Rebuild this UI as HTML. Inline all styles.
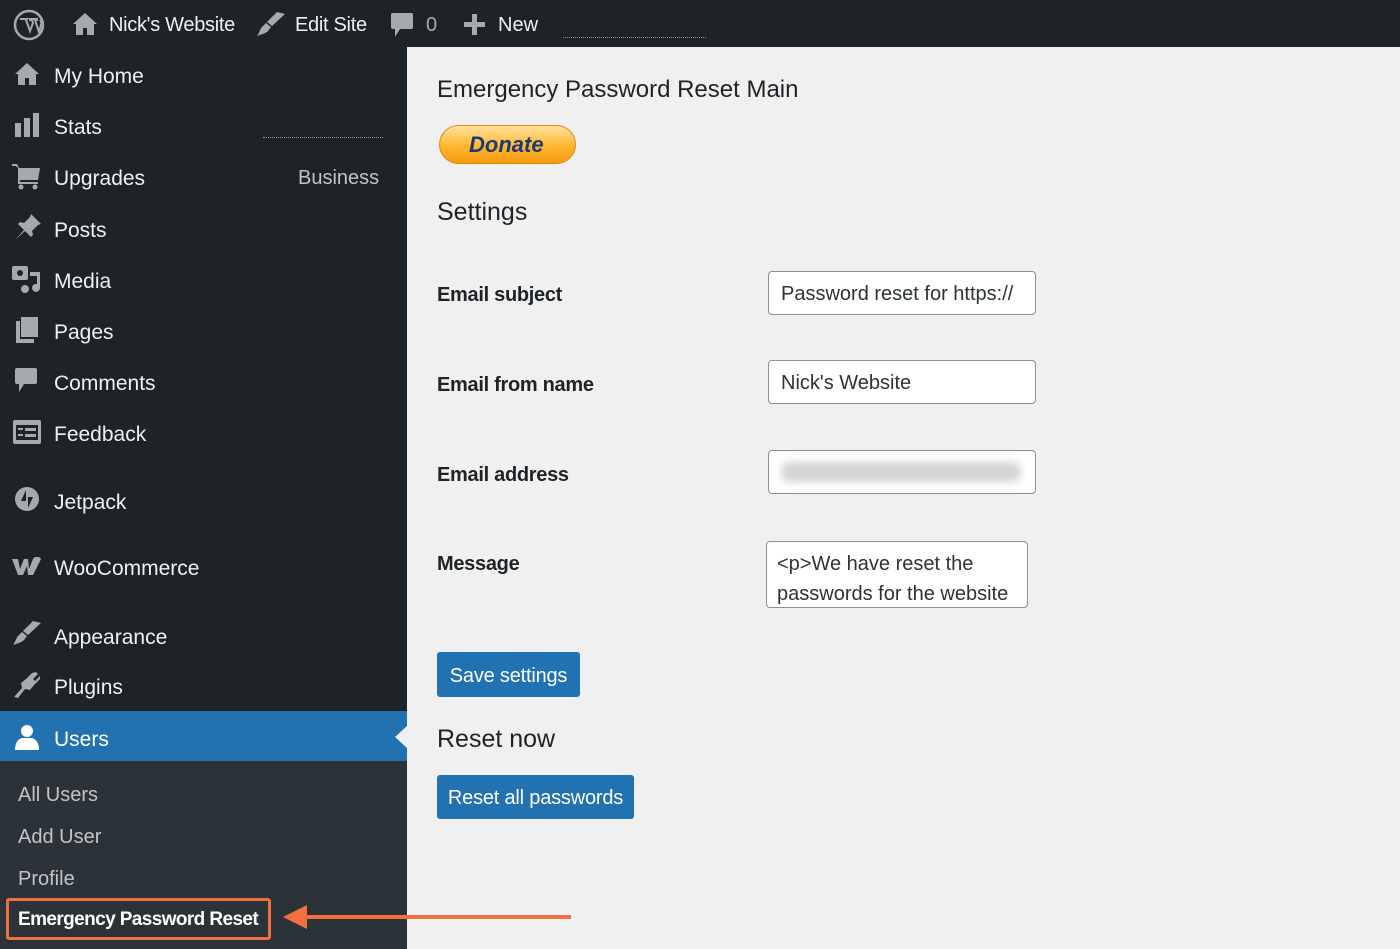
<!DOCTYPE html>
<html><head><meta charset="utf-8"><style>
*{margin:0;padding:0;box-sizing:border-box}
body{width:1400px;height:949px;overflow:hidden;background:#f0f0f1;font-family:"Liberation Sans",sans-serif;position:relative}
.a{position:absolute;white-space:nowrap}
#top{left:0;top:0;width:1400px;height:47px;background:#1d2327}
#side{left:0;top:47px;width:407px;height:902px;background:#1d2327}
#sub{left:0;top:761px;width:407px;height:188px;background:#2c3338}
.m{color:#f0f0f1;font-size:21px;left:54px}
.tb{color:#f0f0f1;font-size:20px;top:14px}
.ic{position:absolute;fill:#a7aaad}
.s{color:#c3c4c7;font-size:20px;left:18px}
.lbl{left:437px;font-size:20px;color:#1d2327;font-weight:bold}
.in{position:absolute;background:#fff;border:1px solid #8c8f94;border-radius:4px;font-size:20px;color:#2c3338;padding:0 12px;display:flex;align-items:center}
.btn{position:absolute;background:#2271b1;color:#fff;border-radius:3px;font-size:20px;display:flex;align-items:center;justify-content:center;letter-spacing:-0.2px}
h2{position:absolute;font-size:25px;font-weight:normal;color:#1d2327;left:437px;white-space:nowrap}
</style></head><body>
<div class="a" id="top"></div>
<div class="a" id="side"></div>
<div class="a" id="sub"></div>
<!-- top bar -->
<svg class="ic" style="left:13px;top:9px" width="32" height="32" viewBox="0 0 32 32"><circle cx="16" cy="16" r="14" fill="none" stroke="#a7aaad" stroke-width="2.5"/><path d="M7 10h7l-1 1 4 11 3-8-1-3h-2v-1h7v1h-2l4 12 2-7c1-3-1-5-1-5" fill="none" stroke="#a7aaad" stroke-width="2"/></svg>
<svg class="ic" style="left:73px;top:13px" width="24" height="22" viewBox="0 0 24 22"><path d="M12 0L0 11h3v11h7v-7h4v7h7V11h3z"/></svg>
<div class="a tb" style="left:109px;letter-spacing:-0.3px">Nick's Website</div>
<svg class="ic" style="left:257px;top:12px" width="28" height="24" viewBox="0 0 28 24"><path d="M28 2L20 0 10 10l5 4zM9 11l5 4-3 4c-2 2-5 3-11 5 3-4 3-7 5-9z"/></svg>
<div class="a tb" style="left:295px;letter-spacing:-0.3px">Edit Site</div>
<svg class="ic" style="left:391px;top:13px" width="22" height="26" viewBox="0 0 22 26"><path d="M2 0h18a2 2 0 012 2v12a2 2 0 01-2 2H9l-5 8v-8H2a2 2 0 01-2-2V2a2 2 0 012-2z"/></svg>
<div class="a tb" style="left:426px;color:#a7aaad">0</div>
<svg class="ic" style="left:464px;top:14px" width="21" height="21"><rect x="8" y="0" width="5" height="21"/><rect x="0" y="8" width="21" height="5"/></svg>
<div class="a tb" style="left:498px">New</div>
<div class="a" style="left:563px;top:37px;width:143px;border-top:1px dotted #8c8f94"></div>
<!-- side menu -->
<svg class="ic" style="left:15px;top:63px" width="24" height="22" viewBox="0 0 24 22"><path d="M12 0L0 11h3v11h7v-7h4v7h7V11h3z"/></svg>
<div class="a m" style="top:65px">My Home</div>
<svg class="ic" style="left:15px;top:113px" width="24" height="24"><rect x="0" y="10" width="6" height="14"/><rect x="9" y="5" width="6" height="19"/><rect x="18" y="0" width="6" height="24"/></svg>
<div class="a m" style="top:116px">Stats</div>
<div class="a" style="left:263px;top:137px;width:120px;border-top:1px dotted #8c8f94"></div>
<svg class="ic" style="left:12px;top:164px" width="28" height="26" viewBox="0 0 28 26"><path d="M0 0h5l2 4h21l-2 12H8v2h18v2H6V4L4 2H0z"/><circle cx="9" cy="23" r="2.5"/><circle cx="23" cy="23" r="2.5"/></svg>
<div class="a m" style="top:167px">Upgrades</div>
<div class="a" style="left:298px;top:167px;font-size:20px;color:#c3c4c7">Business</div>
<svg class="ic" style="left:13px;top:214px" width="28" height="26" viewBox="0 0 28 26"><path d="M18 0l10 10-3 1-6 6 1 4-2 2-6-6-10 9 9-10-6-6 2-2 4 1 6-6z"/></svg>
<div class="a m" style="top:219px">Posts</div>
<svg class="ic" style="left:12px;top:266px" width="30" height="28" viewBox="0 0 30 28"><rect x="0" y="0" width="16" height="14" rx="2"/><circle cx="8" cy="7" r="3" fill="#1d2327"/><path d="M18 6h10v16a4 4 0 11-3-4V10h-7z"/><circle cx="13" cy="23" r="4"/></svg>
<div class="a m" style="top:270px">Media</div>
<svg class="ic" style="left:16px;top:317px" width="22" height="26"><rect x="5" y="0" width="17" height="20"/><rect x="0" y="4" width="4" height="22"/><rect x="0" y="22" width="18" height="4"/></svg>
<div class="a m" style="top:321px">Pages</div>
<svg class="ic" style="left:15px;top:368px" width="22" height="26" viewBox="0 0 22 26"><path d="M2 0h18a2 2 0 012 2v12a2 2 0 01-2 2H9l-5 8v-8H2a2 2 0 01-2-2V2a2 2 0 012-2z"/></svg>
<div class="a m" style="top:372px">Comments</div>
<svg class="ic" style="left:13px;top:420px" width="28" height="24"><rect x="0" y="0" width="28" height="24" rx="2"/><rect x="3" y="5" width="22" height="15" fill="#1d2327"/><rect x="5" y="8" width="5" height="2"/><rect x="12" y="8" width="11" height="3"/><rect x="5" y="14" width="5" height="2"/><rect x="12" y="14" width="11" height="3"/></svg>
<div class="a m" style="top:423px">Feedback</div>
<svg class="ic" style="left:15px;top:487px" width="24" height="24" viewBox="0 0 24 24"><circle cx="12" cy="12" r="12"/><path d="M11 3v11H6zM13 21V10h5z" fill="#1d2327"/></svg>
<div class="a m" style="top:491px">Jetpack</div>
<svg class="ic" style="left:12px;top:557px" width="30" height="20" viewBox="0 0 30 20"><path d="M0 2h6l2 10 4-10h4l1 10 4-10c2-3 6-3 8 0l-8 16h-5l-1-9-4 9H6z"/></svg>
<div class="a m" style="top:557px">WooCommerce</div>
<svg class="ic" style="left:13px;top:621px" width="28" height="24" viewBox="0 0 28 24"><path d="M28 2L20 0 10 10l5 4zM9 11l5 4-3 4c-2 2-5 3-11 5 3-4 3-7 5-9z"/></svg>
<div class="a m" style="top:626px">Appearance</div>
<svg class="ic" style="left:14px;top:672px" width="26" height="26" viewBox="0 0 26 26"><path d="M22 0l2 2-5 5 2 2 5-5 0 3-6 6-4 5-5-1-7 9-4-1 8-9-1-5 5-4 6-6z"/></svg>
<div class="a m" style="top:676px">Plugins</div>
<div class="a" style="left:0;top:711px;width:407px;height:50px;background:#2271b1"></div>
<div class="a" style="left:395px;top:726px;width:0;height:0;border-top:11px solid transparent;border-bottom:11px solid transparent;border-right:12px solid #f0f0f1"></div>
<svg class="ic" style="left:15px;top:724px;fill:#fff" width="24" height="26" viewBox="0 0 24 26"><circle cx="12" cy="7" r="6"/><path d="M0 26c0-8 4-12 8-12h8c4 0 8 4 8 12z"/></svg>
<div class="a m" style="top:728px;color:#fff">Users</div>
<div class="a s" style="top:784px">All Users</div>
<div class="a s" style="top:826px">Add User</div>
<div class="a s" style="top:868px">Profile</div>
<div class="a" style="left:6px;top:898px;width:265px;height:42px;border:3px solid #f26f3f;border-radius:3px"></div>
<div class="a" style="left:18px;top:909px;font-size:19px;color:#fff;font-weight:bold;letter-spacing:-0.6px">Emergency Password Reset</div>
<!-- arrow -->
<div class="a" style="left:300px;top:915px;width:271px;height:4px;background:#f26f3f"></div>
<div class="a" style="left:283px;top:905px;width:0;height:0;border-top:12px solid transparent;border-bottom:12px solid transparent;border-right:24px solid #f26f3f"></div>
<!-- main -->
<h2 style="top:76px;font-size:24px">Emergency Password Reset Main</h2>
<div class="a" style="left:439px;top:125px;width:137px;height:39px;border-radius:20px;background:linear-gradient(#ffe2a0,#ffb52e 55%,#f59b12);border:1px solid #e08a10"></div>
<div class="a" style="left:469px;top:132px;font-size:22px;font-weight:bold;font-style:italic;color:#1b3a78">Donate</div>
<h2 style="top:198px">Settings</h2>
<div class="a lbl" style="top:284px;letter-spacing:-0.3px">Email subject</div>
<div class="in" style="left:768px;top:271px;width:268px;height:44px;padding-top:3px">Password reset for https://</div>
<div class="a lbl" style="top:374px;letter-spacing:-0.3px">Email from name</div>
<div class="in" style="left:768px;top:360px;width:268px;height:44px;padding-top:3px">Nick's Website</div>
<div class="a lbl" style="top:464px;letter-spacing:-0.3px">Email address</div>
<div class="in" style="left:768px;top:450px;width:268px;height:44px"><div style="width:240px;height:20px;background:#d4d4d6;filter:blur(4px);border-radius:8px"></div></div>
<div class="a lbl" style="top:553px;letter-spacing:-0.3px">Message</div>
<div class="in" style="left:766px;top:541px;width:262px;height:67px;align-items:flex-start;padding:7px 10px;line-height:30px;white-space:normal;overflow:hidden">&lt;p&gt;We have reset the passwords for the website</div>
<div class="btn" style="left:437px;top:652px;width:143px;height:45px;padding-top:3px">Save settings</div>
<h2 style="top:725px">Reset now</h2>
<div class="btn" style="left:437px;top:775px;width:197px;height:44px;padding-top:3px">Reset all passwords</div>
</body></html>
